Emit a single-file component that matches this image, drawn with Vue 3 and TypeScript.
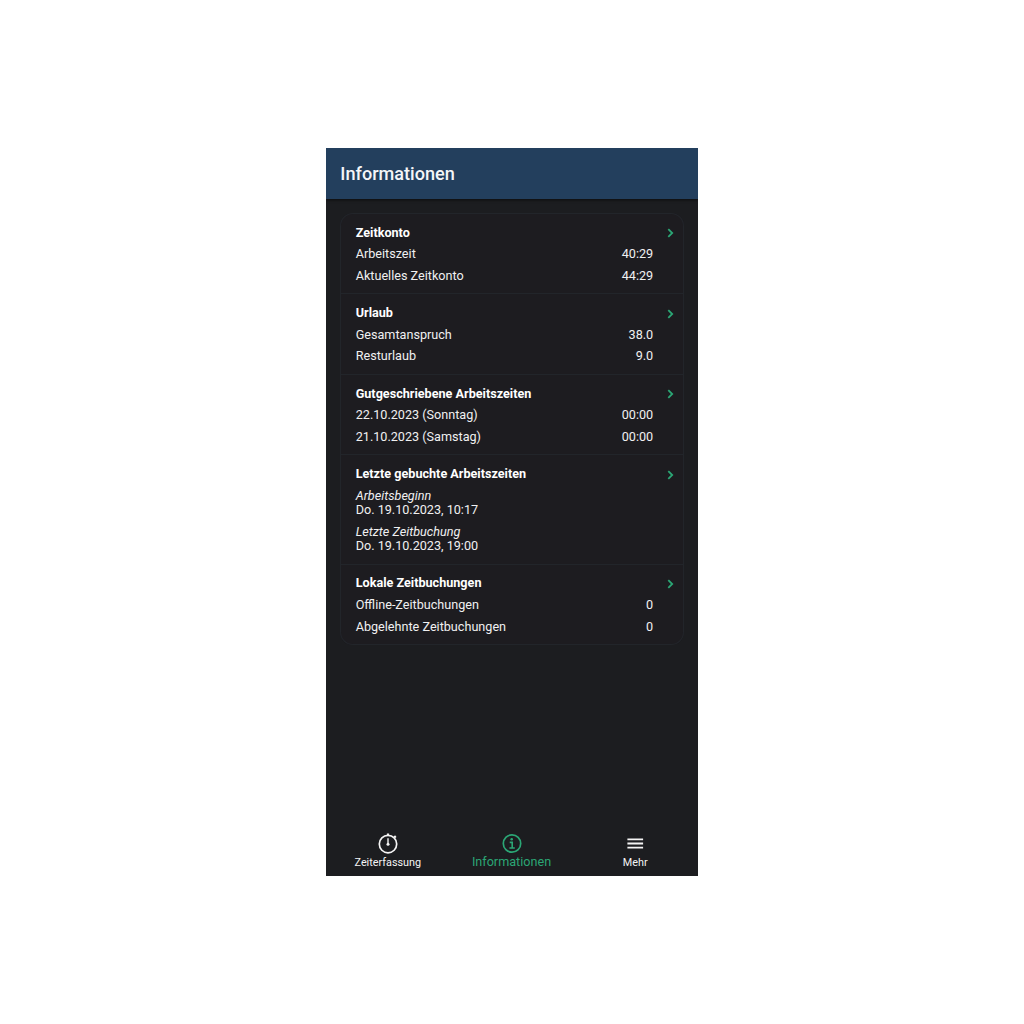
<script setup lang="ts">
interface Row {
  label: string
  value?: string
  detail?: string
}
interface Section {
  title: string
  rows: Row[]
}

const sections: Section[] = [
  {
    title: 'Zeitkonto',
    rows: [
      { label: 'Arbeitszeit', value: '40:29' },
      { label: 'Aktuelles Zeitkonto', value: '44:29' },
    ],
  },
  {
    title: 'Urlaub',
    rows: [
      { label: 'Gesamtanspruch', value: '38.0' },
      { label: 'Resturlaub', value: '9.0' },
    ],
  },
  {
    title: 'Gutgeschriebene Arbeitszeiten',
    rows: [
      { label: '22.10.2023 (Sonntag)', value: '00:00' },
      { label: '21.10.2023 (Samstag)', value: '00:00' },
    ],
  },
  {
    title: 'Letzte gebuchte Arbeitszeiten',
    rows: [
      { label: 'Arbeitsbeginn', detail: 'Do. 19.10.2023, 10:17' },
      { label: 'Letzte Zeitbuchung', detail: 'Do. 19.10.2023, 19:00' },
    ],
  },
  {
    title: 'Lokale Zeitbuchungen',
    rows: [
      { label: 'Offline-Zeitbuchungen', value: '0' },
      { label: 'Abgelehnte Zeitbuchungen', value: '0' },
    ],
  },
]
</script>

<template>
  <main class="stage">
    <div class="phone">
      <header class="bar"><h1>Informationen</h1></header>
      <div class="content">
        <div class="card">
          <section v-for="s in sections" :key="s.title" class="section">
            <div class="body">
              <h2><span>{{ s.title }}</span></h2>
              <template v-for="r in s.rows" :key="r.label">
                <div v-if="r.detail" class="entry">
                  <em>{{ r.label }}</em>
                  <span>{{ r.detail }}</span>
                </div>
                <div v-else class="row">
                  <span>{{ r.label }}</span>
                  <span>{{ r.value }}</span>
                </div>
              </template>
            </div>
            <svg class="chevron" viewBox="0 0 8 10" width="8" height="10">
              <path d="M2.3 1.1 L6.2 5 L2.3 8.9" />
            </svg>
          </section>
        </div>
      </div>
      <nav class="tabs">
        <a class="tab">
          <svg class="icon" viewBox="0 0 22 22" width="22" height="22">
            <circle cx="11" cy="12.1" r="8.7" stroke-width="1.7" />
            <path d="M11 1.5V3.7M17.3 5.4L18.8 4.1" stroke-width="2.2" />
            <path d="M11 6.2V12.2" stroke-width="1.4" />
            <circle cx="11" cy="12.3" r="1.5" class="solid" />
          </svg>
          <span>Zeiterfassung</span>
        </a>
        <a class="tab active">
          <svg class="icon" viewBox="0 0 22 22" width="22" height="22">
            <circle cx="11" cy="11.5" r="8.7" stroke-width="1.7" />
            <circle cx="10.7" cy="7.3" r="1.3" class="solid" />
            <path d="M8.7 10.4H11.2V15.9M8.4 16H13.8" stroke-width="1.6" />
          </svg>
          <span>Informationen</span>
        </a>
        <a class="tab">
          <svg class="icon" viewBox="0 0 22 22" width="22" height="22">
            <path d="M3.4 7.3H19.1M3.4 11.5H19.1M3.4 15.7H19.1" stroke-width="1.8" />
          </svg>
          <span>Mehr</span>
        </a>
      </nav>
    </div>
  </main>
</template>

<style>
body {
  background: #fff;
}
</style>

<style scoped>
.stage {
  box-sizing: border-box;
  width: 1024px;
  height: 1024px;
  padding: 148px 326px;
  font-family: Roboto, 'Liberation Sans', sans-serif;
}
.phone {
  display: flex;
  flex-direction: column;
  width: 372px;
  height: 728px;
  overflow: hidden;
  background: #1c1d20;
  color: #f0f0f1;
}
.bar {
  display: flex;
  align-items: center;
  flex: none;
  height: 50.6px;
  padding-left: 14.3px;
  background: #233f5d;
  box-shadow: 0 1px 3px rgba(0, 0, 0, 0.6);
}
h1 {
  margin: 0;
  font-size: 18.1px;
  font-weight: 500;
  color: #f4f6f8;
}
.content {
  flex: 1;
  padding: 14.4px 14.4px 0;
}
.card {
  border-radius: 13px;
  background: #1d1c20;
  box-shadow: inset 0 0 0 1px #22252a;
}
.section {
  display: flex;
  box-sizing: border-box;
  height: 80.5px;
  padding: 12.6px 10px 0 15.3px;
}
.section:nth-child(4) {
  height: 109.4px;
}
.section:last-child {
  height: 81.2px;
}
.section + .section {
  padding-top: 11.6px;
  border-top: 1px solid #22252a;
}
.body {
  display: flex;
  flex-direction: column;
  flex: 1;
  gap: 7.2px;
  font-size: 12.64px;
  line-height: 14.45px;
  white-space: nowrap;
}
h2 {
  margin: 0;
  font-size: 12.64px;
  font-weight: 700;
  color: #fff;
}
.row {
  display: flex;
  justify-content: space-between;
}
.entry {
  display: flex;
  flex-direction: column;
}
.chevron {
  flex: none;
  margin: 2.9px 0 0 12.4px;
}
.chevron path {
  fill: none;
  stroke: #2ba675;
  stroke-width: 1.8;
}
.tabs {
  display: flex;
  flex: none;
  width: 371px;
  height: 44px;
}
.tab {
  display: flex;
  flex: 1;
  flex-direction: column;
  align-items: center;
  font-size: 10.84px;
  line-height: 14px;
  color: #f4f4f4;
}
.tab span {
  margin-top: 2px;
}
.active {
  color: #2ba675;
  font-size: 12.64px;
}
.active span {
  margin-top: 1px;
}
.icon {
  flex: none;
  fill: none;
  stroke: currentColor;
}
.solid {
  fill: currentColor;
  stroke: none;
}
</style>
